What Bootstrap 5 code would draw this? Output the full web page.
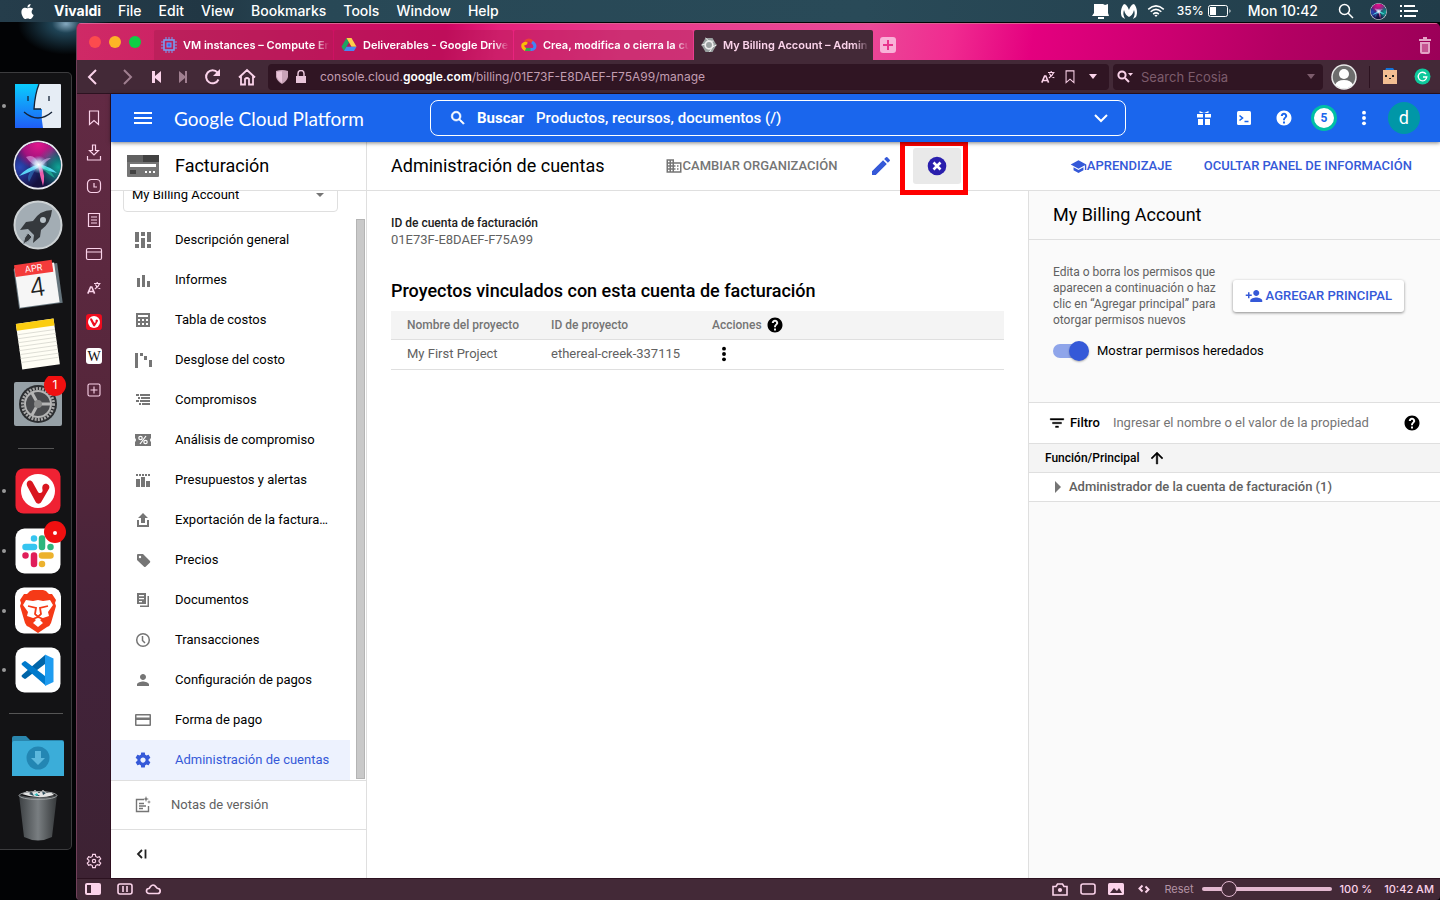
<!DOCTYPE html>
<html lang="es">
<head>
<meta charset="utf-8">
<meta name="viewport" content="width=device-width, initial-scale=1">
<title>Facturación – Google Cloud Platform</title>
<link href="https://cdn.jsdelivr.net/npm/bootstrap@5.3.0/dist/css/bootstrap.min.css" rel="stylesheet">
<style>
:root{--ui:"Inter","Liberation Sans",sans-serif;--gcp:"Roboto","Liberation Sans",sans-serif;--pink:#fbd3ea;--plum:#432937;--plum-dark:#301523;--blue:#3559d8;--line:#dfdfdf}
body{background:#020305 radial-gradient(ellipse at 66px 24px,#86aac0 0,#1f4355 14px,transparent 48px) no-repeat;font-family:var(--ui);font-size:13px;color:#000;line-height:16px}
svg{display:block;flex:none}
button{border:0;background:none;padding:0;color:inherit;line-height:inherit}
a{color:inherit;text-decoration:none}
.ico{width:18px;height:18px;fill:currentColor}
.ln{fill:none;stroke:currentColor}
/* system menu bar */
.menubar{height:22px;background:linear-gradient(90deg,#253d4b,#213744 14%,#284856 22%,#294a58 60%,#213c49);color:#fff;font-size:14px;font-weight:500;padding:0 22px 0 20px}
.menubar .menu-items{gap:17px}
.menubar .app-name{font-weight:700;margin-left:2px}
.menubar .charge{font-size:12px}
/* dock */
.dock-col{width:76px;padding-top:50px}
.dock{width:72px;background:#131315;border:1px solid #3c3c3e;border-left:0;border-radius:0 5px 5px 0;padding:3px 0}
.dock button{display:block;height:60px}
.dock svg{width:72px;height:60px}
.dock hr{width:36px;margin:12px 0 12px 18px;opacity:1;border-top:1px solid #555}
.dock hr.wide{width:54px;margin-left:9px;margin-bottom:12px}
/* browser window */
.win{min-width:0;margin-top:1px;border-radius:5px 5px 4px 4px;overflow:hidden;border-left:1px solid #70415a;background:var(--plum);color:var(--pink)}
.tabs{height:37px;padding:6px 8px 0 12px;border-top:1px solid #dd5f93;background:linear-gradient(100deg,#cf2a66 0,#cb1b63 13%,#d00563 27%,#e8207c 31%,#e83a8b 40%,#ea4897 58%,#f02b90 64%,#e4007f 70%,#cb0070 80%,#b40063 88%,#9b0058)}
.lights{gap:8px;width:65px;height:24px}
.lights i{width:12px;height:12px;border-radius:50%}
.red-dot{background:#fc4b4e}.amber-dot{background:#fdb426}.green-dot{background:#0fce45}
.tab-item{flex:0 1 179px;height:30px;margin-right:1px;padding:0 4px 0 7px;background:rgba(160,30,75,.38);color:#fff;font-size:11px;font-weight:600;border-radius:2px 2px 0 0;min-width:0;gap:6px}
.tab-item.active{background:var(--plum);color:var(--pink)}
.tab-item span{flex:1;overflow:hidden;white-space:nowrap;text-align:left;-webkit-mask-image:linear-gradient(90deg,#000 90%,transparent);mask-image:linear-gradient(90deg,#000 90%,transparent)}
.addbar{height:34px;border-bottom:1px solid #2c1220;padding-right:9px}
.addbar .nav-btns{width:191px;padding-left:5px}
.field{background:var(--plum-dark);border-radius:4px;height:26px}
.url{font-size:12px;color:#c29db1;outline:0;margin-left:6px}
.url b{color:#fff;font-weight:600}
.search-web{width:210px}
.search-web input{background:none;border:0;color:var(--pink);font-size:13px;outline:0;min-width:0;padding:0}
.search-web input::placeholder{color:#7d5c6c;opacity:1}
.divider{width:1px;height:22px;background:#2c1220;margin:0 8px 0 12px}
.panel{width:34px;padding-top:7px;background:linear-gradient(#622a44,#54263a 45%,#42233a 70%,#3d2233);border-right:1px solid #2f1020}
.panel button{height:34px;width:33px;display:grid;place-items:center}
.status{height:22px;border-top:1px solid #2c1220;font-size:11px;font-weight:500;padding:0 6px 1px 8px}
.status input[type=range]{width:130px;height:16px;background:none;-webkit-appearance:none;appearance:none;margin:0}
.status input::-webkit-slider-runnable-track{height:4px;border-radius:2px;background:#e3b8d0}
.status input::-webkit-slider-thumb{-webkit-appearance:none;width:16px;height:16px;margin-top:-6px;border-radius:50%;background:var(--plum);border:1px solid #e3b8d0}
.status .group{gap:12px}
.dim{color:#b493a5}
.off{color:#a07f90}
/* console */
.console{font-family:var(--gcp);background:#fff;color:#000;min-width:0}
.topbar{height:48px;background:#1a66ed;color:#fff;box-shadow:0 1px 4px rgba(0,0,0,.5);z-index:2}
.topbar .brand{width:319px;padding-left:22px;gap:21px;font:19px "Lato","Liberation Sans",sans-serif}
.find{height:36px;border:1px solid #fff;border-radius:8px;padding:0 14px 0 18px;font-size:15px;font-weight:500}
.find label{font-weight:700;margin:0 8px 0 10px}
.find input{background:none;border:0;color:#fff;outline:0;font-weight:500;min-width:0;padding:0}
.find input::placeholder{color:#fff;opacity:1}
.tools{width:314px;padding-right:16px}
.tools button{width:40px;height:40px;display:grid;place-items:center}
.tools .count-ring{width:26px;height:26px;border:3px solid #00bfa5;border-radius:50%;background:#fff;color:#1a66ed;font-size:12px;font-weight:700;line-height:20px}
.tools .user{width:32px;height:32px;border-radius:50%;background:#0097a7;font-size:18px;line-height:32px}
.side{width:256px;border-right:1px solid var(--line)}
.side-title{height:49px;padding-left:16px;gap:16px;border-bottom:1px solid var(--line)}
.title{font-size:18px;line-height:24px;font-weight:400;margin:0}
.pick{height:21px;overflow:hidden;padding:0 28px 0 12px}
.pick select{height:34px;border:1px solid var(--line);border-radius:4px;padding:0 8px;font-size:13px;background:#fff;-webkit-appearance:none;appearance:none}
.pick .caret{right:42px;top:2px;border:4px solid transparent;border-top-color:#757575;border-bottom:0}
.side-list{padding-top:8px}
.side-list a{height:40px;margin-right:6px;padding-left:23px;gap:23px;color:#000}
.side-list a.on{background:#edf2fe;color:var(--blue)}
.side-list .ico{color:#757575}
.side-list a.on .ico{color:var(--blue)}
.thumb{width:9px;margin:7px 1px 1px 0;background:#c9c9c9;border:1px solid #b4b4b4}
.side-foot{border-top:1px solid var(--line);height:49px;padding-left:23px;color:#616161;gap:19px}
.work{min-width:0}
.actions{height:49px;border-bottom:1px solid var(--line);padding:0 28px 0 24px}
.act{font-size:13px;font-weight:500}
.change-org{margin-left:60px;color:#757575}
.space-act{margin-left:32px}
.blue{color:var(--blue)}
.drop-wrap{margin-left:20px}
.drop{width:48px;height:36px;place-items:center;background:#e9e9e9;border-radius:3px;color:#2a1fad}
.ring{inset:-7px -7px -11px -13px;border:5px solid #f00;pointer-events:none}
.content{padding:24px}
.content h2{font-size:18px;line-height:24px;font-weight:500;margin:30px 0 8px}
.id-label{font-size:12px;font-weight:500;color:#212121}
.id-value{color:#616161;line-height:18px}
.grid-table{table-layout:fixed;font-size:13px;color:#616161;width:100%}
.grid-table th,.grid-table td{padding:0 0 0 16px;border-bottom:1px solid var(--line);height:28px}
.grid-table td{height:30px}
.grid-table th{background:#f4f4f4;font-size:12px;font-weight:500;color:#757575}
.c-name{width:144px}.c-id{width:161px}
.info{width:412px;border-left:1px solid var(--line);background:#fafafa}
.info>*{border-bottom:1px solid var(--line)}
.info-title{height:49px}
.perm{height:163px;padding:24px 36px 0 24px}
.perm p{font-size:12px;width:168px;color:#616161;margin:0}
.inherit{margin-top:13px}
.add-btn{height:32px;padding:0 12px;gap:3px;background:#fff;border-radius:3px;box-shadow:0 1px 3px rgba(0,0,0,.45);white-space:nowrap}
.switch{-webkit-appearance:none;appearance:none;width:36px;height:20px;margin:0;position:relative}
.switch::before{content:"";position:absolute;inset:3px 2px 3px 0;border-radius:7px;background:#8fa5ea}
.switch::after{content:"";position:absolute;right:0;top:0;width:20px;height:20px;border-radius:50%;background:var(--blue);box-shadow:0 1px 2px rgba(0,0,0,.3)}
.filter{height:41px;background:#fff;padding:0 19px}
.filter label{font-weight:500;margin-right:13px}
.filter input{border:0;outline:0;font-size:13px;padding:0;min-width:0;color:#000}
.filter input::placeholder{color:#757575;opacity:1}
.roles-head{height:29px;background:#f4f4f4;padding-left:16px;font-size:12px;font-weight:500}
.role-row{height:29px;background:#fff;color:#616161;font-weight:500;padding-left:26px;gap:8px}
</style>
</head>
<body class="min-vh-100 d-flex flex-column">
<svg width="0" height="0" class="position-absolute" aria-hidden="true">
<defs>
<radialGradient id="sg1" cx=".5" cy=".05" r=".55"><stop stop-color="#e2158c"/><stop offset=".6" stop-color="#a3127e"/><stop offset="1" stop-color="#a3127e" stop-opacity="0"/></radialGradient>
<radialGradient id="sg2" cx=".95" cy=".55" r=".5"><stop stop-color="#0fa394"/><stop offset="1" stop-color="#0fa394" stop-opacity="0"/></radialGradient>
<radialGradient id="sg3" cx=".1" cy=".55" r=".5"><stop stop-color="#2b47b8"/><stop offset="1" stop-color="#2b47b8" stop-opacity="0"/></radialGradient>
<radialGradient id="sg4"><stop stop-color="#fff"/><stop offset=".4" stop-color="#d9f4ff" stop-opacity=".75"/><stop offset="1" stop-color="#7fd8ff" stop-opacity="0"/></radialGradient>
</defs>
<symbol id="search" viewBox="0 0 24 24"><path d="M15.5 14h-.79l-.28-.27A6.47 6.47 0 0 0 16 9.5 6.5 6.5 0 1 0 9.5 16c1.61 0 3.09-.59 4.23-1.57l.27.28v.79l5 4.99L20.49 19l-4.99-5zm-6 0C7.01 14 5 11.99 5 9.5S7.01 5 9.5 5 14 7.01 14 9.5 11.99 14 9.5 14z" stroke="currentColor" stroke-width=".8"/></symbol>
<symbol id="help" viewBox="0 0 24 24"><path d="M12 2C6.48 2 2 6.48 2 12s4.48 10 10 10 10-4.48 10-10S17.52 2 12 2zm1.300 17.300h-2.600v-2.600h2.600v2.600zm1.970-7.850l-.9.92C13.650 13.100 13.300 13.700 13.300 15h-2.600v-.5c0-1.100.45-2.100 1.170-2.830l1.240-1.260c.37-.36.39-.76.39-1.210 0-.9-.7-1.500-1.500-1.500s-1.500.7-1.500 1.700H7.700c0-2.410 1.890-4.300 4.300-4.300s4.300 1.890 4.300 4.200c0 .88-.46 1.580-1.030 2.150z"/></symbol>
<symbol id="dots" viewBox="0 0 18 18"><circle cx="9" cy="3" r="2.200"/><circle cx="9" cy="9" r="2.200"/><circle cx="9" cy="15" r="2.200"/></symbol>
<symbol id="translate" viewBox="0 0 14 14"><path d="M.8 12.600 3.600 6h1.200L7.600 12.600M1.900 10.500h4.600" fill="none" stroke="currentColor" stroke-width="1.600"/><path d="M7 2.500h6.500M10.200 1v1.500M12.500 2.800C11.700 5 9.800 7 7.800 8M8.300 3.500c1 2 2.600 3.500 5 4.300" fill="none" stroke="currentColor" stroke-width="1.200"/></symbol>
<symbol id="mark" viewBox="0 0 14 16"><path d="M2.500 1h9v13.500L7 10.500l-4.500 4z" fill="none" stroke="currentColor" stroke-width="1.200"/></symbol>
<symbol id="siri" viewBox="0 0 50 50"><circle cx="25" cy="25" r="24.500" fill="#e8e8f0"/><circle cx="25" cy="25" r="22.800" fill="#15103f"/><g><circle cx="25" cy="25" r="22.800" fill="url(#sg3)"/><circle cx="25" cy="25" r="22.800" fill="url(#sg1)"/><circle cx="25" cy="25" r="22.800" fill="url(#sg2)"/></g><path d="M13 17Q22 13 26 25 31 17 38 18 32 22 28 27 18 25 13 17z" fill="#e8b4f0" opacity=".55"/><path d="M26 24Q13 28 6 36 18 32 26 27zM26 24Q38 27 44 33 34 31 26 27z" fill="#5fe6ff" opacity=".9"/><path d="M25 25Q27 36 30 46 33 36 28 25z" fill="#ff63b5" opacity=".9"/><path d="M24 26Q20 34 16 42 12 34 24 26z" fill="#3aa3e8" opacity=".4"/><path d="M27 26Q34 34 42 38 34 24 27 26z" fill="#27e0b0" opacity=".5"/><circle cx="25.500" cy="24.500" r="9" fill="url(#sg4)"/></symbol>
<symbol id="viv" viewBox="0 0 24 24"><path d="M6.500 8.200c.6-.9 2-.9 2.700.2l2.900 5.200c.9 1 2.400.3 2.300-1.100-.3-1.300-.3-2.700 1.300-3.300 1.500-.3 2.700 1.200 2.100 2.500l-4.100 7.100c-.7 1.100-2.200 1.100-2.900 0L6.400 10.500c-.4-.8-.4-1.600.1-2.300z" transform="translate(0 -1)"/></symbol>
<symbol id="gear" viewBox="0 0 24 24"><path d="M19.430 12.980c.04-.32.07-.64.07-.98s-.03-.66-.07-.98l2.110-1.650c.19-.15.24-.42.12-.64l-2-3.460c-.12-.22-.39-.3-.61-.22l-2.490 1c-.52-.4-1.080-.73-1.690-.98l-.38-2.650C14.460 2.180 14.250 2 14 2h-4c-.25 0-.46.18-.49.42l-.38 2.650c-.61.25-1.170.59-1.690.98l-2.490-1c-.23-.09-.49 0-.61.22l-2 3.460c-.13.22-.07.49.12.64l2.110 1.650c-.04.32-.07.65-.07.98s.03.66.07.98l-2.110 1.650c-.19.15-.24.42-.12.64l2 3.460c.12.22.39.3.61.22l2.490-1c.52.4 1.080.73 1.690.98l.38 2.650c.03.24.24.42.49.42h4c.25 0 .46-.18.49-.42l.38-2.650c.61-.25 1.170-.59 1.690-.98l2.490 1c.23.09.49 0 .61-.22l2-3.460c.12-.22.07-.49-.12-.64l-2.110-1.650zM12 15.500c-1.930 0-3.500-1.570-3.500-3.500s1.570-3.500 3.500-3.500 3.500 1.570 3.500 3.500-1.570 3.500-3.500 3.500z"/></symbol>
</svg>

<header class="menubar d-flex align-items-center justify-content-between">
  <nav class="menu-items d-flex align-items-center">
    <svg width="15" height="15" viewBox="0 0 16 16" fill="#fff"><path d="M11.182.008C11.148-.03 9.923.023 8.857 1.180c-1.066 1.156-.902 2.482-.878 2.516.024.034 1.520.087 2.475-1.258.955-1.345.762-2.391.728-2.430zm3.314 11.733c-.048-.096-2.325-1.234-2.113-3.422.212-2.189 1.675-2.789 1.698-2.854.023-.065-.597-.79-1.254-1.157a3.692 3.692 0 0 0-1.563-.434c-.108-.003-.483-.095-1.254.116-.508.139-1.653.589-1.968.607-.316.018-1.256-.522-2.267-.665-.647-.125-1.333.131-1.824.328-.49.196-1.422.754-2.074 2.237-.652 1.482-.311 3.830-.067 4.560.244.729.625 1.924 1.273 2.796.576.984 1.340 1.667 1.659 1.899.319.232 1.219.386 1.843.067.502-.308 1.408-.485 1.766-.472.357.013 1.061.154 1.782.539.571.197 1.111.115 1.652-.105.541-.221 1.324-1.059 2.238-2.758.347-.79.505-1.217.473-1.282z"/></svg>
    <a href="#" class="app-name">Vivaldi</a><a href="#">File</a><a href="#">Edit</a><a href="#">View</a><a href="#">Bookmarks</a><a href="#">Tools</a><a href="#">Window</a><a href="#">Help</a>
  </nav>
  <div class="d-flex align-items-center">
    <svg width="20" height="16" viewBox="0 0 20 16" class="me-2" fill="#fff"><path d="M3 1h9l2 1 3-1v9l1 3H1l2-3zM7 14h6v2H7z"/></svg>
    <svg width="20" height="16" viewBox="0 0 20 16" class="me-2" fill="#fff"><path d="M5 1c2 0 4 3 5 6 1-3 3-6 5-6 3 3 4 9 2 13l-3 2c2-4 2-6 1-9-1 4-3 6-5 7-2-1-4-3-5-7-1 3-1 5 1 9l-3-2C1 10 2 4 5 1z"/></svg>
    <svg width="22" height="16" viewBox="0 0 22 16" class="me-2 pe-1" fill="none" stroke="#fff" stroke-width="1.800"><path d="M1.500 6q9.500-8.500 19 0M4.500 9q6.500-6 13 0M7.500 11.800q3.500-3 7 0"/><path d="M9 13.200q2-1.500 4 0l-2 2z" fill="#fff" stroke="none"/></svg>
    <span class="charge me-1">35%</span>
    <svg width="24" height="12" viewBox="0 0 24 12" class="me-3"><rect x=".5" y=".5" width="19" height="11" rx="2" fill="none" stroke="#fff"/><rect x="2" y="2" width="6" height="8" fill="#fff"/><path d="M21.500 4v4q2-2 0-4" fill="#fff"/></svg>
    <span class="me-3">Mon 10:42</span>
    <svg width="16" height="16" viewBox="0 0 16 16" class="ln ms-1 me-3" stroke-width="1.500"><circle cx="6.500" cy="6.500" r="5"/><path d="m10 10 5 5"/></svg>
    <svg width="17" height="17" class="me-2"><use href="#siri"/></svg>
    <svg width="19" height="14" viewBox="0 0 19 14" class="ms-1 ln" stroke-width="2"><path d="M1 2h2M1 7h2M1 12h2M5 2h11M5 7h14M5 12h12"/></svg>
  </div>
</header>

<div class="d-flex flex-grow-1">
<aside class="dock-col flex-shrink-0">
  <div class="dock">
    <button aria-label="Finder"><svg viewBox="0 0 72 60"><defs><linearGradient id="fb" x2="0" y2="1"><stop stop-color="#09cdfd"/><stop offset="1" stop-color="#1f5df5"/></linearGradient></defs><circle cx="4" cy="30" r="2" fill="#999"/><rect x="15" y="8" width="46" height="44" rx="1" fill="#e6edf5"/><path d="M15 8h24q-4 10-5 25h8q-1 10 1 19H15z" fill="url(#fb)"/><path d="M28 20v5M49 20v5M24 36q14 12 28 0M39 8q-4 10-5 25h7" fill="none" stroke="#142236" stroke-width="1.300"/></svg></button>
    <button aria-label="Siri"><svg viewBox="0 0 72 60"><use href="#siri" x="13" y="4" width="50" height="50"/></svg></button>
    <button aria-label="Launchpad"><svg viewBox="0 0 72 60"><circle cx="38" cy="29" r="23.500" fill="#a3adb4" stroke="#cdd2d4" stroke-width="2"/><path d="M52 14q-12 0-19 11l-7 1-6 8 8-1 6 6-1 8 7-6 1-7q10-7 11-20z" fill="#35393d"/><circle cx="43" cy="24" r="3" fill="#b8c2c8"/><path d="M28 37l4 4q-3 5-9 7 1-7 5-11z" fill="#35393d" stroke="#a3adb4"/></svg></button>
    <button aria-label="Calendario"><svg viewBox="0 0 72 60"><g transform="rotate(-8 38 29)"><path d="M16 10h44v40H16z" fill="#65747c"/><path d="M17 9h40v40H17z" fill="#f6f6f6"/><path d="M17 6h38v12H17z" fill="#f43b3b"/><text x="36" y="15" font-size="9" fill="#fff" text-anchor="middle">APR</text><text x="37" y="40" font-size="26" fill="#222" text-anchor="middle" font-weight="300">4</text></g></svg></button>
    <button aria-label="Notas"><svg viewBox="0 0 72 60"><g transform="rotate(-8 38 29)"><path d="M19 5h38v46H19z" fill="#fffef5"/><path d="M19 5h38v7H19z" fill="#fbcd10"/><path d="M19 16h38M19 20h38M19 24h38M19 28h38M19 32h38M19 36h38M19 40h38M19 44h38" stroke="#d8d8d0" stroke-width=".8"/></g></svg></button>
    <button aria-label="Preferencias"><svg viewBox="0 0 72 60"><rect x="14" y="6" width="48" height="44" rx="2" fill="#96a0a6"/><circle cx="38" cy="28" r="19" fill="#2b2d30"/><circle cx="38" cy="28" r="15.500" fill="none" stroke="#a8a8a8" stroke-width="3" stroke-dasharray="2 1.200"/><circle cx="38" cy="28" r="13" fill="#4a4b4e" stroke="#b5b5b5" stroke-width="2"/><path d="m38 28-6-11M38 28h13M38 28l-6 11" stroke="#b5b5b5" stroke-width="3"/><circle cx="38" cy="28" r="4" fill="#888"/><circle cx="55" cy="9" r="11" fill="#f01010"/><text x="55" y="13" fill="#fff" font-size="12" text-anchor="middle">1</text></svg></button>
    <hr>
    <button aria-label="Vivaldi"><svg viewBox="0 0 72 60"><circle cx="4" cy="30" r="2" fill="#999"/><rect x="15.500" y="7.500" width="45" height="45" rx="8" fill="#ef2233"/><circle cx="38" cy="30" r="17" fill="#fff"/><use href="#viv" x="15" y="7" width="46" height="46" fill="#d9161f"/></svg></button>
    <button aria-label="Slack"><svg viewBox="0 0 72 60"><circle cx="4" cy="30" r="2" fill="#999"/><rect x="15.500" y="7.500" width="45" height="45" rx="9" fill="#fff"/><g stroke-linecap="round" stroke-width="6.500"><path d="M25.500 26h8.500M34 17.500v0" stroke="#36c5f0"/><path d="M42 17.500V26M50.500 26v0" stroke="#2eb67d"/><path d="M42 34.500h8.500M42 43v0" stroke="#ecb22e"/><path d="M34 34.500V43M25.500 34.500v0" stroke="#e01e5a"/></g><circle cx="55" cy="11" r="11" fill="#f01010"/><circle cx="55" cy="12" r="2" fill="#fff"/></svg></button>
    <button aria-label="Brave"><svg viewBox="0 0 72 60"><circle cx="4" cy="30" r="2" fill="#999"/><rect x="15" y="6.500" width="46" height="46" rx="9" fill="#fff"/><path d="m30 10 3-1h10l3 1 3 3h3l4 6-1 3 1 3-5 17q-1 3-4 4l-9 6-9-6q-3-1-4-4l-5-17 1-3-1-3 4-6h3z" fill="#f53a17"/><path d="m26 19 7 1 5-1 5 1 7-1 3 5-5 7 1 4-6 2-3 2 3 3-5 4-5-4 3-3-3-2-6-2 1-4-5-7z" fill="#fff"/><path d="m28 25 8 2-1 6 3 3 3-3-1-6 8-2M33 38l5-2 5 2" fill="none" stroke="#f53a17" stroke-width="1.800"/></svg></button>
    <button aria-label="Visual Studio Code"><svg viewBox="0 0 72 60"><circle cx="4" cy="29" r="2" fill="#999"/><rect x="15.500" y="6.500" width="45" height="45" rx="9" fill="#fff"/><path d="m22 34 23-20v9L26 37.500q-1 .8-2 0l-2-1.500q-1-1 0-2z" fill="#0065a9"/><path d="m22 22 2-1.500q1-.8 2 0L45 35v9L22 24q-1-1 0-2z" fill="#007acc"/><path d="m45 13.500 8.500 4v23.500l-8.500 4z" fill="#1f9cf0"/></svg></button>
    <hr class="wide">
    <button aria-label="Descargas"><svg viewBox="0 0 72 60"><path d="M12 12q0-2 2-2h12l4 4h32q2 0 2 2v33H12z" fill="#2a86ad"/><path d="M12 18q0-3 2-3h48q2 0 2 3v32H12z" fill="#3badd9"/><circle cx="38" cy="32" r="11.500" fill="#2386b3"/><path d="M35 25h6v7h4l-7 7-7-7h4z" fill="#5cb8dd"/></svg></button>
    <button aria-label="Papelera"><svg viewBox="0 0 72 60"><defs><linearGradient id="tr"><stop stop-color="#3d4144"/><stop offset=".5" stop-color="#797e81"/><stop offset="1" stop-color="#35383a"/></linearGradient></defs><path d="M19 9q19 5 38 0l-5 42q-14 7-28 0z" fill="url(#tr)"/><path d="m22 8 5-3 4 2 4-3 4 3 4-3 4 3 4-1 3 3q-16 5-32-1z" fill="#e4e4e4"/><path d="m29 8 3-2 2 4zM42 5l4 2-3 2zM37 8l3 2h-4z" fill="#2b4a58"/><path d="M34 9l3-2 1 3z" fill="#2bc0c0"/><ellipse cx="38" cy="9.500" rx="19" ry="4" fill="none" stroke="#9a9ea0"/></svg></button>
  </div>
</aside>

<div class="win flex-grow-1 d-flex flex-column">
  <div class="tabs d-flex">
    <div class="lights d-flex align-items-center flex-shrink-0"><i class="red-dot"></i><i class="amber-dot"></i><i class="green-dot"></i></div>
    <button class="tab-item d-flex align-items-center"><svg width="16" height="16" viewBox="0 0 16 16" fill="none" stroke="#7a9cf0"><rect x="3" y="3" width="10" height="10" stroke-width="1.600"/><rect x="6" y="6" width="4" height="4" fill="#3a6ff0"/><path d="M5 0v3M8 0v3M11 0v3M5 13v3M8 13v3M11 13v3M0 5h3M0 8h3M0 11h3M13 5h3M13 8h3M13 11h3"/></svg><span>VM instances – Compute En</span></button>
    <button class="tab-item d-flex align-items-center"><svg width="16" height="16" viewBox="0 0 16 16"><path d="M5.500 1 8 5.500 3 14 .5 9.800z" fill="#1ea362"/><path d="M5.500 1h5l5 8.800h-5z" fill="#ffcf48"/><path d="M3 14l2.500-4.200h10L13 14z" fill="#4688f4"/></svg><span>Deliverables - Google Drive</span></button>
    <button class="tab-item d-flex align-items-center"><svg width="16" height="16" viewBox="0 0 16 16" fill="none" stroke-width="3"><path d="M4 5q3.500-4 7.500 0" stroke="#ea4335"/><path d="M11 5q4 2.500 2.500 6-1 1.500-3 1.500H9" stroke="#4285f4"/><path d="M9.500 12.500H4" stroke="#34a853"/><path d="M4.500 12.500Q1 11 2 7.500q2-2 4-.5" stroke="#fbbc05"/></svg><span>Crea, modifica o cierra la cu</span></button>
    <button class="tab-item active d-flex align-items-center"><svg width="16" height="16" viewBox="0 0 16 16"><path d="M4.500 1h7L15.500 8l-4 7h-7L.5 8z" fill="#9aa0a0"/><circle cx="8" cy="8" r="3.800" fill="none" stroke="#eee" stroke-width="1.700"/><path d="M4.500 1 8 4.200h4.500M15.500 8l-4 2-3 5M.5 8l4-1" stroke="#eee" fill="none"/></svg><span>My Billing Account – Admin</span></button>
    <button aria-label="Nueva pestaña" class="ms-1 align-self-center"><svg width="18" height="16" viewBox="0 0 18 16"><rect x="2" width="16" height="16" rx="3" fill="#f9b2d8"/><path d="M10 3v10M5 8h10" stroke="#e8338c" stroke-width="2"/></svg></button>
    <button aria-label="Pestañas cerradas" class="ms-auto align-self-center"><svg width="14" height="17" viewBox="0 0 14 17" fill="#e3a3c5"><path d="M1 2h4V0h4v2h4v2H1zM2 5h10v10q0 2-2 2H4q-2 0-2-2z"/><path d="M5 7v8M7 7v8M9 7v8" stroke="#a7045f"/></svg></button>
  </div>

  <div class="addbar d-flex align-items-center">
    <div class="nav-btns d-flex align-items-center flex-shrink-0">
      <button aria-label="Atrás" class="me-3"><svg width="20" height="18" viewBox="0 0 20 18" class="ln" stroke-width="2"><path d="m14 2-7 7 7 7"/></svg></button>
      <button aria-label="Adelante" class="me-3 off"><svg width="18" height="18" viewBox="0 0 18 18" class="ln" stroke-width="2"><path d="m6 2 7 7-7 7"/></svg></button>
      <button aria-label="Rebobinar" class="me-3"><svg width="10" height="12" viewBox="0 0 10 12" fill="currentColor"><path d="M0 0h3v5l6-5v12L3 7v5H0z"/></svg></button>
      <button aria-label="Avance rápido" class="me-3 off"><svg width="10" height="12" viewBox="0 0 10 12" fill="currentColor"><path d="M9 0H7v5L1 0v12l6-5v5h2z"/></svg></button>
      <button aria-label="Recargar" class="me-3"><svg width="18" height="18" viewBox="0 0 18 18" class="ln" stroke-width="2"><path d="M14.500 11.500A6.500 6.500 0 1 1 13.500 4.500"/><path d="M16 1v7H9z" fill="currentColor" stroke="none"/></svg></button>
      <button aria-label="Inicio"><svg width="18" height="18" viewBox="0 0 18 18" class="ln" stroke-width="1.800"><path d="M1 9.500 9 2l8 7.500M3 8v8.500h4V11q2-2 4 0v5.500h4V8"/></svg></button>
    </div>
    <div class="field flex-grow-1 d-flex align-items-center px-2">
      <svg width="12" height="14" viewBox="0 0 12 14" fill="#c9a3b8"><path d="M0 1q6-2 12 0v6q-1 4-6 7-5-3-6-7z"/><path d="M1 2q2.500-.8 5-.8V13Q2 10 1 7z" fill="#e9c4d9"/></svg>
      <svg width="10" height="13" viewBox="0 0 10 13" class="ms-2 me-1" style="margin-left:10px" fill="#e9c4d9"><path d="M0 6h10v7H0z"/><path d="M2 6V3.500q0-3 3-3t3 3V6" fill="none" stroke="#e9c4d9" stroke-width="1.500"/></svg>
      <div class="url flex-grow-1 ps-1 text-nowrap" role="textbox" aria-label="Dirección" contenteditable="true" spellcheck="false">console.cloud.<b>google.com</b>/billing/01E73F-E8DAEF-F75A99/manage</div>
      <button aria-label="Traducir"><svg width="14" height="14"><use href="#translate"/></svg></button>
      <button aria-label="Añadir marcador" class="mx-2"><svg width="14" height="14"><use href="#mark"/></svg></button>
      <button aria-label="Historial" class="mx-1"><svg width="8" height="5" viewBox="0 0 8 5" fill="currentColor"><path d="M0 0h8L4 5z"/></svg></button>
    </div>
    <div class="field search-web d-flex align-items-center ms-1 ps-1 pe-2 flex-shrink-0">
      <svg width="16" height="14" viewBox="0 0 16 14" class="ln" stroke-width="2"><circle cx="5" cy="5" r="3.600"/><path d="m8 8 4 4"/><path d="M11 3h5l-2.500 3z" fill="currentColor" stroke="none"/></svg>
      <input class="flex-grow-1 mx-2" type="search" placeholder="Search Ecosia" aria-label="Search Ecosia">
      <svg width="8" height="5" viewBox="0 0 8 5" fill="#7d5c6c"><path d="M0 0h8L4 5z"/></svg>
    </div>
    <button aria-label="Perfil" class="ms-2"><svg width="26" height="26" viewBox="0 0 26 26"><circle cx="13" cy="13" r="12" fill="#6d6d6d" stroke="#e8e8e8" stroke-width="1.500"/><circle cx="13" cy="10" r="5" fill="#fff"/><path d="M4 21q2-5 9-5t9 5q-9 7-18 0z" fill="#fff"/></svg></button>
    <div class="divider"></div>
    <button aria-label="Extensión" class="mx-1"><svg width="16" height="17" viewBox="0 0 16 17"><path d="M4 0h7l2 3H3z" fill="#1473d8"/><rect x="1" y="2" width="14" height="14" fill="#f2bd92"/><path d="M3 7h2v2H3zM10 7h2v2h-2zM7 10h2v1H7z" fill="#222"/></svg></button>
    <button aria-label="Grammarly" class="ms-2 ps-1"><svg width="17" height="17" viewBox="0 0 17 17"><circle cx="8.500" cy="8.500" r="8" fill="#0ec99c"/><path d="M12 6A4.300 4.300 0 1 0 12.800 9H9" fill="none" stroke="#fff" stroke-width="1.300"/></svg></button>
  </div>

  <div class="d-flex flex-grow-1">
    <aside class="panel d-flex flex-column flex-shrink-0">
      <button aria-label="Marcadores"><svg width="16" height="16"><use href="#mark"/></svg></button>
      <button aria-label="Descargas"><svg width="16" height="17" viewBox="0 0 16 17" class="ln"><path d="M6.500 1h3v5.500h3L8 11 3.500 6.500h3zM1.500 12v4h13v-4" stroke-width="1.200"/></svg></button>
      <button aria-label="Historial"><svg width="16" height="16" viewBox="0 0 16 16" class="ln" stroke-width="1.200"><rect x="1.500" y="1.500" width="13" height="13" rx="4"/><path d="M8 5v4h3"/></svg></button>
      <button aria-label="Notas"><svg width="14" height="16" viewBox="0 0 14 16" class="ln" stroke-width="1.200"><path d="M1.500 1.500h11v13h-11zM4 5h6M4 8h6M4 11h6"/></svg></button>
      <button aria-label="Ventana"><svg width="18" height="14" viewBox="0 0 18 14" class="ln" stroke-width="1.200"><rect x="1.500" y="1.500" width="15" height="11" rx="1.500"/><path d="M1.500 5h15"/></svg></button>
      <button aria-label="Traducir"><svg width="14" height="14"><use href="#translate"/></svg></button>
      <button aria-label="Vivaldi"><svg width="16" height="16" viewBox="0 0 24 24"><rect width="24" height="24" rx="5" fill="#ef0c1e"/><circle cx="12" cy="12" r="9" fill="#fff"/><use href="#viv" width="24" height="24" fill="#ef0c1e"/></svg></button>
      <button aria-label="Wikipedia"><svg width="16" height="16" viewBox="0 0 16 16"><rect width="16" height="16" rx="3" fill="#fff"/><text x="8" y="12.500" font-family="Liberation Serif" font-size="14" text-anchor="middle" fill="#111">W</text></svg></button>
      <button aria-label="Añadir panel"><svg width="14" height="14" viewBox="0 0 14 14" class="ln" stroke-width="1.100"><rect x="1" y="1" width="12" height="12" rx="1.500"/><path d="M7 3.500v7M3.500 7h7"/></svg></button>
      <button aria-label="Ajustes" class="mt-auto"><svg width="16" height="16" viewBox="0 0 24 24" class="ln" stroke-width="1.700"><path d="M10 2h4l.6 3.200 2.500 1.400 3-1.200 2 3.500-2.500 2.100v2l2.500 2.100-2 3.500-3-1.200-2.500 1.400L14 22h-4l-.6-3.200-2.500-1.400-3 1.200-2-3.500L4.400 13v-2L1.900 8.900l2-3.500 3 1.200 2.500-1.400z"/><circle cx="12" cy="12" r="2.500"/></svg></button>
    </aside>

    <div class="console flex-grow-1 d-flex flex-column">
      <header class="topbar position-relative d-flex align-items-center">
        <div class="brand d-flex align-items-center flex-shrink-0">
          <button aria-label="Menú"><svg width="20" height="12" viewBox="0 0 20 12" fill="#fff"><path d="M1 0h18v2H1zM1 5h18v2H1zM1 10h18v2H1z"/></svg></button>
          <a href="#">Google Cloud Platform</a>
        </div>
        <div class="find flex-grow-1 d-flex align-items-center">
          <svg class="ico"><use href="#search"/></svg>
          <label for="q">Buscar</label>
          <input id="q" class="flex-grow-1 ms-1" type="text" placeholder="Productos, recursos, documentos (/)">
          <svg width="20" height="12" viewBox="0 0 20 12" class="ln" stroke-width="2"><path d="m4 3 6 6 6-6"/></svg>
        </div>
        <div class="tools d-flex align-items-center justify-content-end flex-shrink-0">
          <button aria-label="Regalos"><svg width="16" height="16" viewBox="0 0 16 16" fill="#fff"><path d="M1 4h6v3.500H1zM9 4h6v3.500H9zM2 9h5v6H2zM9 9h5v6H9zM3.500 1 8 3l4.500-2v2h-9z"/></svg></button>
          <button aria-label="Cloud Shell"><svg width="14" height="14" viewBox="0 0 14 14"><rect width="14" height="14" rx="1.500" fill="#fff"/><path d="m2.500 4.500 3 2.500-3 2.500M7.500 10.500h4" fill="none" stroke="#1a66ed" stroke-width="1.600"/></svg></button>
          <button aria-label="Ayuda"><svg class="ico"><use href="#help"/></svg></button>
          <button aria-label="Notificaciones"><span class="count-ring">5</span></button>
          <button aria-label="Más"><svg width="16" height="16" fill="#fff"><use href="#dots"/></svg></button>
          <button aria-label="Cuenta"><span class="user">d</span></button>
        </div>
      </header>

      <div class="d-flex flex-grow-1">
        <aside class="side d-flex flex-column flex-shrink-0">
          <div class="side-title d-flex align-items-center">
            <svg width="32" height="22" viewBox="0 0 32 22"><rect width="32" height="22" rx="1" fill="#757575"/><path d="M0 0h32v7H0z" fill="#616161"/><path d="M16 0h16v7H16z" fill="#424242"/><path d="M3 9h26v3H3z" fill="#fff"/><path d="M3 15h6v4H3z" fill="#424242"/><path d="M18 16h2v2h-2zM22 16h2v2h-2zM26 16h2v2h-2z" fill="#fff"/></svg>
            <h1 class="title">Facturación</h1>
          </div>
          <div class="pick d-flex align-items-end position-relative">
            <select class="w-100" aria-label="Cuenta de facturación"><option>My Billing Account</option></select>
            <i class="caret position-absolute"></i>
          </div>
          <div class="d-flex flex-grow-1">
          <nav class="side-list flex-grow-1">
            <a href="#" class="d-flex align-items-center"><svg class="ico" viewBox="0 0 18 18"><path d="M1 1h4v10H1zM1 13h4v4H1zM7 1h4v4H7zM7 7h4v10H7zM13 1h4v10h-4zM13 13h4v4h-4z"/></svg>Descripción general</a>
            <a href="#" class="d-flex align-items-center"><svg class="ico" viewBox="0 0 18 18"><path d="M3 7h3v9H3zM8 4h3v12H8zM13 10h3v6h-3z"/></svg>Informes</a>
            <a href="#" class="d-flex align-items-center"><svg class="ico" viewBox="0 0 18 18"><path fill-rule="evenodd" d="M2 2h14v14H2zM4 4v2h10V4zM4 8v2h2V8zM8 8v2h2V8zM12 8v2h2V8zM4 12v2h2v-2zM8 12v2h2v-2zM12 12v2h2v-2z"/></svg>Tabla de costos</a>
            <a href="#" class="d-flex align-items-center"><svg class="ico" viewBox="0 0 18 18"><path d="M1 2h3v15H1zM6 2h3v3H6zM10 5h3v4h-3zM15 9h3v7h-3z"/></svg>Desglose del costo</a>
            <a href="#" class="d-flex align-items-center"><svg class="ico" viewBox="0 0 18 18"><path d="M2 3h3v2H2zM6 3h10v2H6zM4 6h2v2H4zM7 6h9v2H7zM2 9h3v2H2zM6 9h10v2H6zM5 12h2v2H5zM8 12h8v2H8z"/></svg>Compromisos</a>
            <a href="#" class="d-flex align-items-center"><svg class="ico" viewBox="0 0 18 18"><path d="M1 3h16v4q-2 2 0 4v4H1v-4q2-2 0-4z"/><g fill="none" stroke="#fff" stroke-width="1.200"><circle cx="6.500" cy="7" r="1.700"/><circle cx="11.500" cy="11" r="1.700"/><path d="m12 5-6 8"/></g></svg>Análisis de compromiso</a>
            <a href="#" class="d-flex align-items-center"><svg class="ico" viewBox="0 0 18 18"><path d="M2 3h2v2H2zM5 3h2v2H5zM8 3h2v2H8zM11 3h2v2h-2zM14 3h2v2h-2zM2 8h4v8H2zM7 6h4v10H7zM12 10h4v6h-4z"/></svg>Presupuestos y alertas</a>
            <a href="#" class="d-flex align-items-center"><svg class="ico" viewBox="0 0 18 18"><path d="M9 2l5 5h-3v5H7V7H4zM3 9h2v5h8V9h2v7H3z"/></svg>Exportación de la factura…</a>
            <a href="#" class="d-flex align-items-center"><svg class="ico" viewBox="0 0 18 18"><path fill-rule="evenodd" d="M3 4q0-1 1-1h5l7 7q.5.700 0 1.400l-4.400 4.400q-.8.500-1.500 0L3 9zM6 4.800A1.200 1.200 0 1 0 6 7.200 1.200 1.200 0 1 0 6 4.800z"/></svg>Precios</a>
            <a href="#" class="d-flex align-items-center"><svg class="ico" viewBox="0 0 18 18"><path fill-rule="evenodd" d="M3 2h9v11H3zM5 4v1.200h5V4zM5 7v1.200h5V7zM5 10v1.200h3V10zM13.500 5H15v11H6v-1.500h7.500z"/></svg>Documentos</a>
            <a href="#" class="d-flex align-items-center"><svg class="ico" viewBox="0 0 18 18"><circle cx="9" cy="9" r="6.300" fill="none" stroke="currentColor" stroke-width="1.500"/><path d="M8.500 5v4.500l2.500 2.500" fill="none" stroke="currentColor" stroke-width="1.500"/></svg>Transacciones</a>
            <a href="#" class="d-flex align-items-center"><svg class="ico" viewBox="0 0 24 24"><path d="M12 12c2.210 0 4-1.790 4-4s-1.790-4-4-4-4 1.790-4 4 1.790 4 4 4zm0 2c-2.670 0-8 1.340-8 4v2h16v-2c0-2.660-5.330-4-8-4z"/></svg>Configuración de pagos</a>
            <a href="#" class="d-flex align-items-center"><svg class="ico" viewBox="0 0 18 18"><path fill-rule="evenodd" d="M2 3h14q1 0 1 1v10q0 1-1 1H2q-1 0-1-1V4q0-1 1-1zM2.500 4.500v2h13v-2zM2.500 9v4.500h13V9z"/></svg>Forma de pago</a>
            <a href="#" class="d-flex align-items-center on"><svg class="ico"><use href="#gear"/></svg>Administración de cuentas</a>
          </nav>
          <div class="thumb"></div>
          </div>
          <div class="side-foot d-flex align-items-center"><svg class="ico" viewBox="0 0 18 18"><path d="M10 3.500H2.500v12h12V10M5 7.500h5M5 10h7M5 12.500h4" fill="none" stroke="#757575" stroke-width="1.400"/><path d="M12 0l.8 2.200L15 3l-2.200.8L12 6l-.8-2.200L9.500 3l1.700-.8zM15 4l.5 1.500L17 6l-1.500.5L15 8l-.5-1.500L13 6l1.500-.5z" fill="#757575"/></svg><a href="#">Notas de versión</a></div>
          <div class="side-foot d-flex align-items-center"><button aria-label="Contraer menú"><svg width="18" height="18" viewBox="0 0 18 18" fill="none" stroke="#222" stroke-width="1.800"><path d="M8 5 4 9l4 4M11.500 4.500v9"/></svg></button></div>
        </aside>

        <div class="work flex-grow-1 d-flex flex-column">
          <div class="actions d-flex align-items-center text-nowrap">
            <h2 class="title">Administración de cuentas</h2>
            <button class="act change-org d-flex align-items-center"><svg width="18" height="18" viewBox="0 0 24 24" fill="currentColor"><path d="M12 7V3H2v18h20V7H12zM6 19H4v-2h2v2zm0-4H4v-2h2v2zm0-4H4V9h2v2zm0-4H4V5h2v2zm4 12H8v-2h2v2zm0-4H8v-2h2v2zm0-4H8V9h2v2zm0-4H8V5h2v2zm10 12h-8v-2h2v-2h-2v-2h2v-2h-2V9h8v10zm-2-8h-2v2h2v-2zm0 4h-2v2h2v-2z"/></svg>CAMBIAR ORGANIZACIÓN</button>
            <button aria-label="Editar" class="blue space-act"><svg width="24" height="24" viewBox="0 0 24 24" fill="currentColor"><path d="M3 17.250V21h3.750L17.810 9.940l-3.750-3.750L3 17.250zM20.710 7.040a1 1 0 0 0 0-1.410l-2.340-2.340a1 1 0 0 0-1.410 0l-1.830 1.830 3.750 3.750 1.830-1.830z"/></svg></button>
            <div class="drop-wrap position-relative">
              <button class="drop d-grid" aria-label="Cerrar cuenta"><svg width="20" height="20" viewBox="0 0 20 20"><circle cx="10" cy="10" r="9.300" fill="currentColor"/><path d="m6.500 6.500 7 7M13.500 6.500l-7 7" stroke="#fff" stroke-width="2.600"/></svg></button>
              <div class="ring position-absolute"></div>
            </div>
            <button class="act blue d-flex align-items-center ms-auto"><svg width="17" height="17" viewBox="0 0 24 24" fill="currentColor"><path d="M5 13.180v4L12 21l7-3.820v-4L12 17l-7-3.820zM12 3L1 9l11 6 9-4.910V17h2V9L12 3z"/></svg>APRENDIZAJE</button>
            <button class="act blue space-act">OCULTAR PANEL DE INFORMACIÓN</button>
          </div>
          <div class="d-flex flex-grow-1">
            <main class="content flex-grow-1">
              <div class="id-label">ID de cuenta de facturación</div>
              <div class="id-value">01E73F-E8DAEF-F75A99</div>
              <h2>Proyectos vinculados con esta cuenta de facturación</h2>
              <table class="grid-table">
                <colgroup><col class="c-name"><col class="c-id"><col></colgroup>
                <thead><tr><th>Nombre del proyecto</th><th>ID de proyecto</th><th><span class="d-flex align-items-center gap-1">Acciones <svg class="ico text-black"><use href="#help"/></svg></span></th></tr></thead>
                <tbody><tr><td>My First Project</td><td>ethereal-creek-337115</td><td><button aria-label="Acciones" class="d-block ps-1 text-black"><svg width="16" height="18" fill="currentColor"><use href="#dots"/></svg></button></td></tr></tbody>
              </table>
            </main>
            <aside class="info flex-shrink-0">
              <div class="info-title d-flex align-items-center ps-4"><h2 class="title">My Billing Account</h2></div>
              <div class="perm">
                <div class="d-flex align-items-center justify-content-between"><p>Edita o borra los permisos que aparecen a continuación o haz clic en “Agregar principal” para otorgar permisos nuevos</p>
                <button class="add-btn act blue d-flex align-items-center"><svg width="18" height="18" viewBox="0 0 24 24" fill="currentColor"><path d="M15 12c2.210 0 4-1.790 4-4s-1.790-4-4-4-4 1.790-4 4 1.790 4 4 4zm-9-2V7H4v3H1v2h3v3h2v-3h3v-2H6zm9 4c-2.670 0-8 1.340-8 4v2h16v-2c0-2.660-5.330-4-8-4z"/></svg>AGREGAR PRINCIPAL</button></div>
                <div class="inherit d-flex align-items-center gap-2"><input class="switch" type="checkbox" role="switch" id="inh" checked><label for="inh">Mostrar permisos heredados</label></div>
              </div>
              <div class="filter d-flex align-items-center">
                <svg width="18" height="18" viewBox="0 0 24 24"><path d="M10 18h4v-2h-4v2zM3 6v2h18V6H3zm3 7h12v-2H6v2z" stroke="#000" stroke-width=".5"/></svg>
                <label for="flt" class="ms-1">Filtro</label>
                <input id="flt" type="text" class="flex-grow-1" placeholder="Ingresar el nombre o el valor de la propiedad">
                <svg class="ico"><use href="#help"/></svg>
              </div>
              <div class="roles-head d-flex align-items-center gap-2">Función/Principal <svg width="18" height="18" viewBox="0 0 24 24" stroke="#000" stroke-width=".6"><path d="M4 12l1.410 1.410L11 7.830V20h2V7.830l5.580 5.590L20 12l-8-8-8 8z"/></svg></div>
              <div class="role-row d-flex align-items-center"><svg width="6" height="12" viewBox="0 0 6 12" fill="#757575"><path d="M0 0l6 6-6 6z"/></svg>Administrador de la cuenta de facturación (1)</div>
            </aside>
          </div>
        </div>
      </div>
    </div>
  </div>

  <footer class="status d-flex align-items-center justify-content-between">
    <div class="group d-flex align-items-center">
      <button aria-label="Panel" class="me-1"><svg width="16" height="12" viewBox="0 0 16 12"><rect width="16" height="12" rx="2" fill="currentColor"/><path d="M2 2h4v8H2z" fill="#432937"/></svg></button>
      <button aria-label="Mosaico"><svg width="16" height="12" viewBox="0 0 16 12" class="ln" stroke-width="1.600"><rect x="1" y="1" width="14" height="10" rx="2"/><path d="M6 3v6M10 3v6"/></svg></button>
      <button aria-label="Sincronizar"><svg width="16" height="12" viewBox="0 0 16 12" class="ln" stroke-width="1.700"><path d="M4 10.500h8.500a2.500 2.500 0 0 0 .3-5C11 5.500 11 2 8 2 5.500 2 5 5 4 5.500a2.500 2.500 0 0 0 0 5z"/></svg></button>
    </div>
    <div class="group d-flex align-items-center">
      <button aria-label="Captura"><svg width="16" height="13" viewBox="0 0 16 13" class="ln" stroke-width="1.600"><path d="M1 3.500h3L5.500 1h5L12 3.500h3V12H1z"/><circle cx="8" cy="7" r="1.300" fill="currentColor"/></svg></button>
      <button aria-label="Pantalla"><svg width="16" height="12" viewBox="0 0 16 12" class="ln" stroke-width="1.600"><rect x="1" y="1" width="14" height="10" rx="2"/></svg></button>
      <button aria-label="Imágenes"><svg width="16" height="12" viewBox="0 0 16 12"><rect width="16" height="12" rx="1.500" fill="currentColor"/><path d="m2 10 4-5 3 3 2-3 3 5z" fill="#432937"/></svg></button>
      <button aria-label="Acciones de página"><svg width="16" height="10" viewBox="0 0 16 10" class="ln" stroke-width="2"><path d="M6.500 1.500 3.500 4.500l3 3M9.500 2.500l3 3-3 3"/></svg></button>
      <div class="d-flex align-items-center gap-2"><button class="dim">Reset</button>
      <input type="range" aria-label="Zoom" min="0" max="500" value="85">
      <span>100 %</span></div><span>10:42 AM</span>
    </div>
  </footer>
</div>
</div>
<script src="https://cdn.jsdelivr.net/npm/bootstrap@5.3.0/dist/js/bootstrap.bundle.min.js"></script>
</body>
</html>
